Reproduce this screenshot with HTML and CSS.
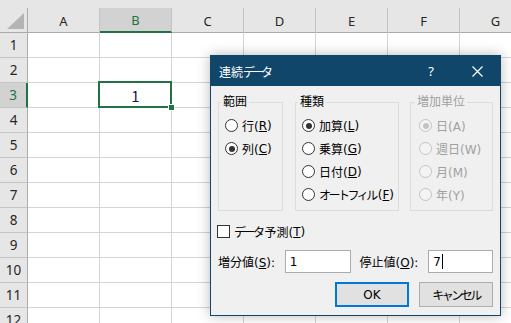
FILE: index.html
```html
<!DOCTYPE html>
<html lang="ja">
<head>
<meta charset="utf-8">
<title>連続データ</title>
<link rel="stylesheet" href="styles.css">
</head>
<body>
<div class="sheet">
  <div class="topstrip"></div>
  <div class="grid">
    <div class="corner"><svg width="17" height="16" viewBox="0 0 17 16"><polygon points="0,16 17,16 17,0" fill="#b4b4b4"/></svg></div>
    <div class="ch">A</div><div class="ch sel">B</div><div class="ch">C</div><div class="ch">D</div><div class="ch">E</div><div class="ch">F</div><div class="ch">G</div>

    <div class="rh">1</div><div class="c"></div><div class="c"></div><div class="c"></div><div class="c"></div><div class="c"></div><div class="c"></div><div class="c"></div>
    <div class="rh">2</div><div class="c"></div><div class="c"></div><div class="c"></div><div class="c"></div><div class="c"></div><div class="c"></div><div class="c"></div>
    <div class="rh sel">3</div><div class="c"></div><div class="c active">1<span class="handle"></span></div><div class="c"></div><div class="c"></div><div class="c"></div><div class="c"></div><div class="c"></div>
    <div class="rh">4</div><div class="c"></div><div class="c"></div><div class="c"></div><div class="c"></div><div class="c"></div><div class="c"></div><div class="c"></div>
    <div class="rh">5</div><div class="c"></div><div class="c"></div><div class="c"></div><div class="c"></div><div class="c"></div><div class="c"></div><div class="c"></div>
    <div class="rh">6</div><div class="c"></div><div class="c"></div><div class="c"></div><div class="c"></div><div class="c"></div><div class="c"></div><div class="c"></div>
    <div class="rh">7</div><div class="c"></div><div class="c"></div><div class="c"></div><div class="c"></div><div class="c"></div><div class="c"></div><div class="c"></div>
    <div class="rh">8</div><div class="c"></div><div class="c"></div><div class="c"></div><div class="c"></div><div class="c"></div><div class="c"></div><div class="c"></div>
    <div class="rh">9</div><div class="c"></div><div class="c"></div><div class="c"></div><div class="c"></div><div class="c"></div><div class="c"></div><div class="c"></div>
    <div class="rh">10</div><div class="c"></div><div class="c"></div><div class="c"></div><div class="c"></div><div class="c"></div><div class="c"></div><div class="c"></div>
    <div class="rh">11</div><div class="c"></div><div class="c"></div><div class="c"></div><div class="c"></div><div class="c"></div><div class="c"></div><div class="c"></div>
    <div class="rh">12</div><div class="c"></div><div class="c"></div><div class="c"></div><div class="c"></div><div class="c"></div><div class="c"></div><div class="c"></div>
  </div>
</div>

<div class="dialog">
  <div class="titlebar">
    <span class="title">連続<span class="kana">データ</span></span>
    <span class="tbtn">?</span>
    <span class="tbtn"><svg width="11" height="11" viewBox="0 0 11 11"><path d="M0.5 0.5 L10.5 10.5 M10.5 0.5 L0.5 10.5" stroke="#fff" stroke-width="1.2"/></svg></span>
  </div>
  <div class="dbody">
    <div class="groups">
      <fieldset class="grp g1">
        <legend>範囲</legend>
        <div class="opt"><span class="radio"></span>行(<u>R</u>)</div>
        <div class="opt"><span class="radio on"></span>列(<u>C</u>)</div>
      </fieldset>
      <fieldset class="grp g2">
        <legend>種類</legend>
        <div class="opt"><span class="radio on"></span>加算(<u>L</u>)</div>
        <div class="opt"><span class="radio"></span>乗算(<u>G</u>)</div>
        <div class="opt"><span class="radio"></span>日付(<u>D</u>)</div>
        <div class="opt"><span class="radio"></span><span class="kana">オートフィル</span>(<u>F</u>)</div>
      </fieldset>
      <fieldset class="grp g3 disabled">
        <legend>増加単位</legend>
        <div class="opt"><span class="radio on"></span>日(A)</div>
        <div class="opt"><span class="radio"></span>週日(W)</div>
        <div class="opt"><span class="radio"></span>月(M)</div>
        <div class="opt"><span class="radio"></span>年(Y)</div>
      </fieldset>
    </div>
    <div class="checkrow"><span class="check"></span><span class="kana">データ</span>予測(<u>T</u>)</div>
    <div class="inputrow">
      <span class="lbl l1">増分値(<u>S</u>):</span>
      <span class="field f1">1</span>
      <span class="lbl l2">停止値(<u>O</u>):</span>
      <span class="field f2">7<span class="caret"></span></span>
    </div>
    <div class="btnrow">
      <span class="btn ok">OK</span>
      <span class="btn"><span class="kana">キャンセル</span></span>
    </div>
  </div>
</div>
</body>
</html>
```

FILE: styles.css
```css
html, body {
  margin: 0;
  padding: 0;
  width: 511px;
  height: 323px;
  overflow: hidden;
  background: #ffffff;
}

.sheet {
  width: 511px;
  height: 323px;
  overflow: hidden;
  font-family: "Noto Sans", "Noto Sans CJK JP", sans-serif;
}

.topstrip {
  height: 8px;
  background: #e6e6e6;
}

.grid {
  display: grid;
  grid-template-columns: 28px repeat(7, 72px);
  grid-auto-rows: 25px;
  width: 532px;
}

.grid > div {
  box-sizing: border-box;
}

.corner {
  background: #e6e6e6;
  border-right: 1px solid #ababab;
  border-bottom: 1px solid #ababab;
  padding: 5px 0 0 7px;
  line-height: 0;
}

.ch {
  background: #e6e6e6;
  border-right: 1px solid #c4c4c4;
  border-bottom: 1px solid #ababab;
  font-size: 13px;
  color: #262626;
  display: flex;
  align-items: center;
  justify-content: center;
  padding-top: 1px;
}

.ch.sel {
  background: #d2d2d2;
  color: #217346;
  border-bottom: 2px solid #217346;
}

.rh {
  background: #e6e6e6;
  border-right: 1px solid #ababab;
  border-bottom: 1px solid #c4c4c4;
  font-size: 13.5px;
  color: #262626;
  display: flex;
  align-items: center;
  justify-content: center;
}

.rh.sel {
  background: #d2d2d2;
  color: #217346;
  border-right: 2px solid #217346;
}

.c {
  border-right: 1px solid #d4d4d4;
  border-bottom: 1px solid #d4d4d4;
}

.c.active {
  position: relative;
  display: flex;
  align-items: center;
  justify-content: center;
  font-family: "Noto Sans CJK JP", sans-serif;
  font-size: 15px;
  color: #1a1a3a;
}

.c.active::before {
  content: "";
  position: absolute;
  left: -2px;
  top: -2px;
  right: -1px;
  bottom: -1px;
  border: 2px solid #217346;
}

.handle {
  position: absolute;
  right: -4px;
  bottom: -4px;
  width: 5px;
  height: 5px;
  background: #217346;
  border: 1px solid #ffffff;
}

/* dialog */
.dialog {
  position: absolute;
  left: 210px;
  top: 55px;
  width: 291px;
  height: 261px;
  box-sizing: border-box;
  border: 1px solid #10466a;
  background: #f0f0f0;
  box-shadow: 0 0 12px rgba(0, 0, 0, 0.28);
  font-family: "DejaVu Sans", "Noto Sans CJK JP", sans-serif;
  font-size: 12px;
  color: #000;
  display: flex;
  flex-direction: column;
}

.kana {
  font-family: "Noto Sans CJK JP", sans-serif;
  letter-spacing: -2.5px;
  margin-right: 2px;
}

.titlebar {
  height: 30px;
  background: #10466a;
  color: #ffffff;
  display: flex;
  align-items: center;
  flex-shrink: 0;
}

.title {
  flex: 1;
  padding-left: 8px;
  font-size: 12px;
}

.title .kana {
  letter-spacing: -3px;
}

.tbtn {
  width: 46px;
  height: 30px;
  display: flex;
  align-items: center;
  justify-content: center;
  font-family: "Noto Sans", sans-serif;
  font-size: 13px;
}

.dbody {
  flex: 1;
  padding: 8px 7px 8px 7px;
  display: flex;
  flex-direction: column;
}

.groups {
  display: flex;
  height: 117px;
}

.grp {
  margin: 0;
  padding: 4px 0 0 6px;
  border: 1px solid #dcdcdc;
  box-sizing: border-box;
  height: 117px;
  min-width: 0;
}

.grp legend {
  padding: 0 2px;
  margin-left: -4px;
  line-height: 16px;
  font-size: 12px;
}

.g1 { width: 65px; }
.g2 { width: 104px; margin-left: 12px; }
.g3 { width: 83px; margin-left: 11px; padding-left: 8px; }

.opt {
  height: 23px;
  display: flex;
  align-items: center;
  white-space: nowrap;
}

.radio {
  width: 13px;
  height: 13px;
  box-sizing: border-box;
  border: 1px solid #333333;
  border-radius: 50%;
  background: #ffffff;
  margin-right: 4px;
  display: flex;
  align-items: center;
  justify-content: center;
  flex-shrink: 0;
}

.radio.on::after {
  content: "";
  width: 6px;
  height: 6px;
  border-radius: 50%;
  background: #333333;
}

.disabled {
  color: #a0a0a0;
}

.disabled .radio {
  border-color: #c3c3c3;
  background: #f4f4f4;
}

.disabled .radio.on::after {
  background: #c3c3c3;
}

.checkrow {
  margin-top: 14px;
  height: 13px;
  display: flex;
  align-items: center;
  margin-left: -1px;
}

.check {
  width: 13px;
  height: 13px;
  box-sizing: border-box;
  border: 1px solid #333333;
  background: #ffffff;
  margin-right: 4px;
}

.inputrow {
  margin-top: 12px;
  height: 23px;
  display: flex;
  align-items: center;
}

.lbl {
  white-space: nowrap;
}

.l1 { width: 67px; }
.l2 { width: 69px; margin-left: 9px; }

.field {
  height: 23px;
  box-sizing: border-box;
  border: 1px solid #acacac;
  background: #ffffff;
  display: flex;
  align-items: center;
  padding-left: 4px;
  font-size: 12px;
}

.f1 { width: 66px; }
.f2 { width: 65px; }

.caret {
  width: 1px;
  height: 15px;
  background: #000;
  margin-left: 1px;
}

.btnrow {
  margin-top: 9px;
  height: 25px;
  display: flex;
  justify-content: flex-end;
  gap: 10px;
}

.btn {
  width: 74px;
  height: 25px;
  box-sizing: border-box;
  border: 1px solid #adadad;
  background: #e1e1e1;
  display: flex;
  align-items: center;
  justify-content: center;
}

.btn.ok {
  border: 2px solid #0078d7;
}

.btn .kana {
  margin-right: 0;
}
```
